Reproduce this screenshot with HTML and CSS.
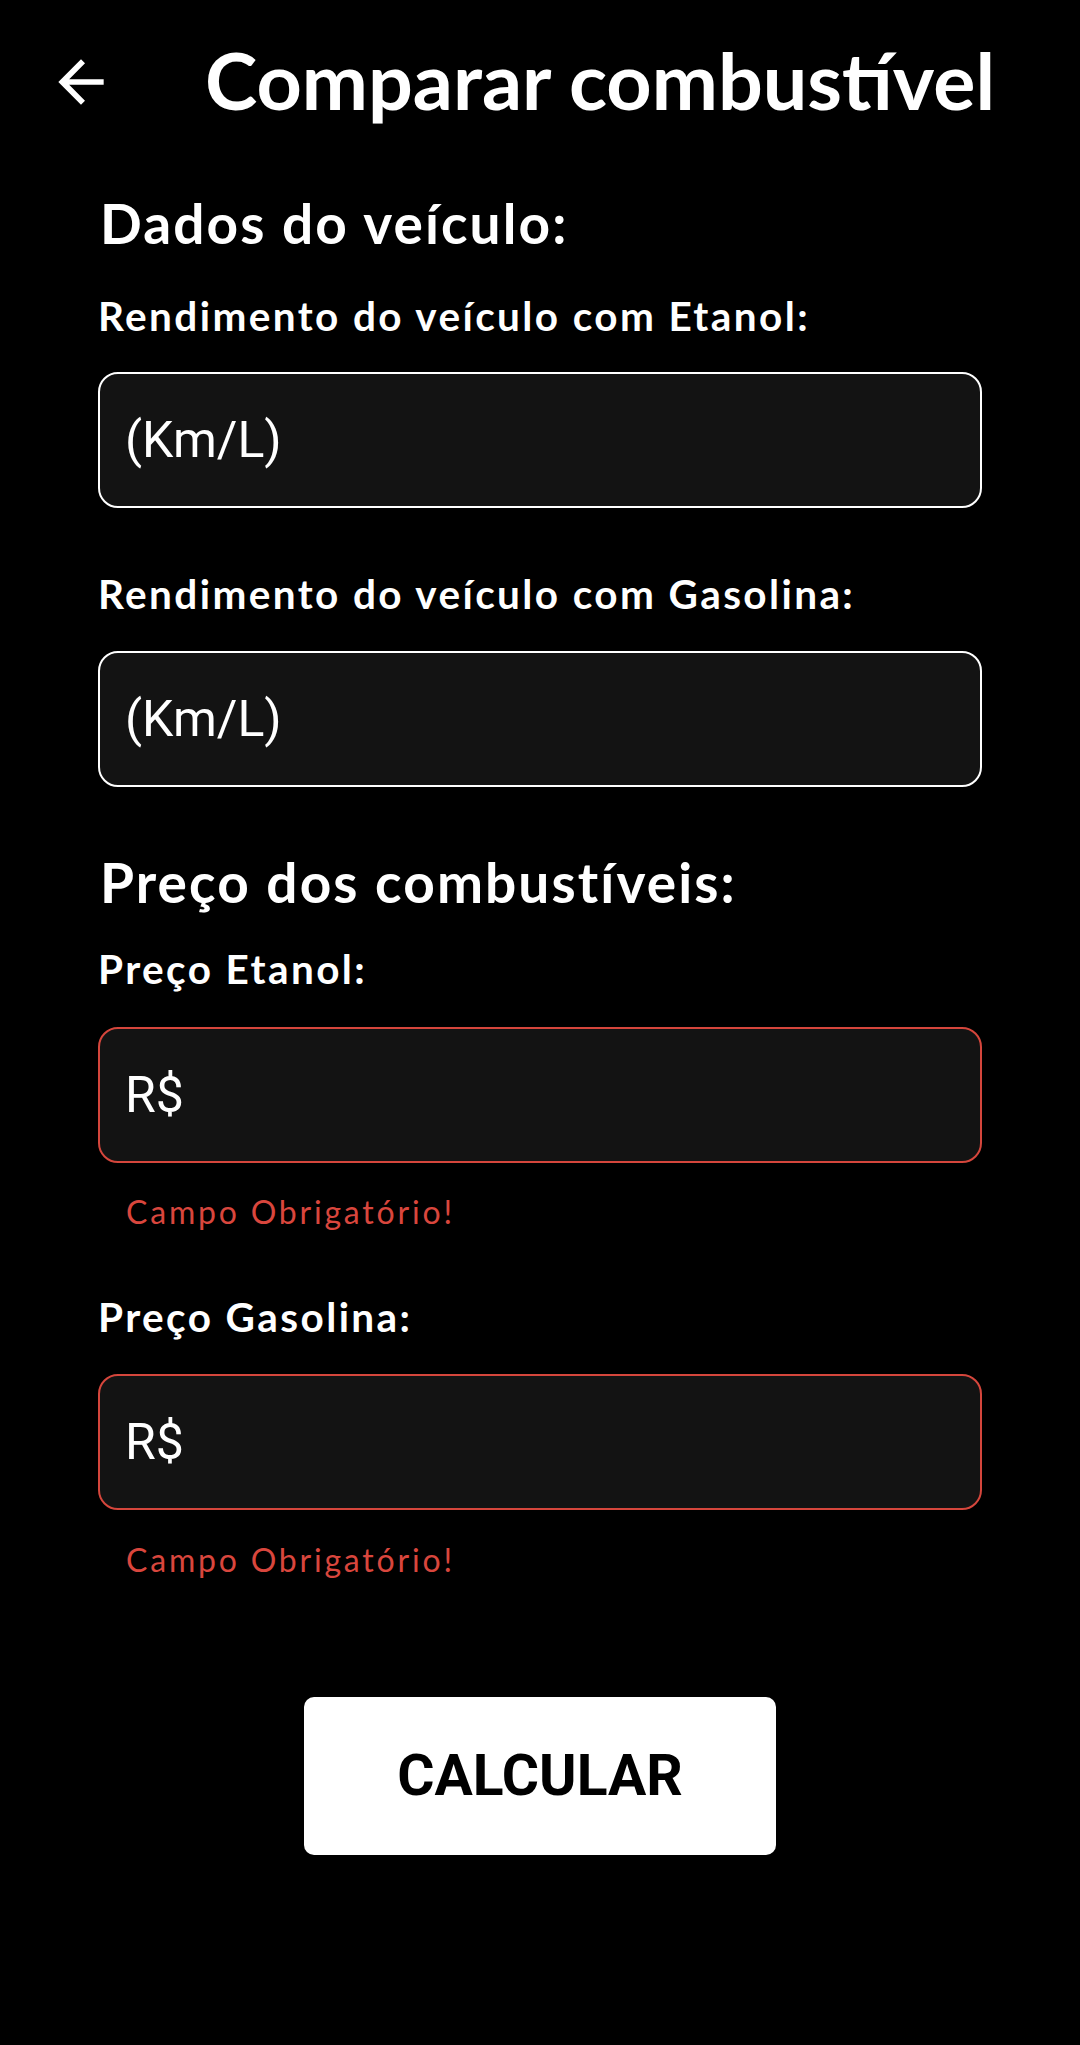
FILE: index.html
```html
<!DOCTYPE html>
<html lang="pt-BR">
<head>
<meta charset="utf-8">
<title>Comparar combustível</title>
<link rel="stylesheet" href="styles.css">
</head>
<body>
<div class="screen">
  <header class="topbar">
    <svg class="back" viewBox="0 0 24 24" aria-hidden="true"><path d="M20 11H7.83l5.59-5.59L12 4l-8 8 8 8 1.41-1.41L7.83 13H20v-2z" fill="#fff"/></svg>
    <h1 class="title">Comparar combustível</h1>
  </header>
  <main class="form">
    <h2 class="section section-first">Dados do veículo:</h2>
    <label class="label label-first">Rendimento do veículo com Etanol:</label>
    <div class="field"><span class="ph">(Km/L)</span></div>
    <label class="label label-next">Rendimento do veículo com Gasolina:</label>
    <div class="field"><span class="ph">(Km/L)</span></div>

    <h2 class="section section-second">Preço dos combustíveis:</h2>
    <label class="label label-price">Preço Etanol:</label>
    <div class="field field-error field-price"><span class="ph">R$</span></div>
    <p class="error error-first">Campo Obrigatório!</p>
    <label class="label label-next2">Preço Gasolina:</label>
    <div class="field field-error"><span class="ph">R$</span></div>
    <p class="error error-second">Campo Obrigatório!</p>

    <div class="actions"><button class="btn" type="button">CALCULAR</button></div>
  </main>
</div>
</body>
</html>
```
FILE: styles.css
```css
html, body {
  margin: 0;
  padding: 0;
  background: #000;
}
.screen {
  width: 1080px;
  min-height: 2045px;
  background: #000;
  color: #fff;
  font-family: "Lato", "Noto Sans", sans-serif;
}
.topbar {
  display: flex;
  align-items: flex-start;
  padding-top: 30px;
}
.back {
  width: 68px;
  height: 68px;
  margin-left: 47px;
  margin-top: 18px;
  flex: none;
}
.title {
  margin: 3px 0 0 90px;
  font-size: 79px;
  line-height: 1.2;
  font-weight: 700;
}
.form {
  display: flex;
  flex-direction: column;
  padding: 0 98px;
}
.section {
  margin: 0;
  padding-left: 2px;
  font-size: 55px;
  line-height: 1.2;
  font-weight: 700;
  letter-spacing: 2.1px;
}
.section-first { margin-top: 62px; }
.section-second { margin-top: 62px; }
.label {
  display: block;
  font-size: 40.5px;
  line-height: 1.2;
  font-weight: 700;
  letter-spacing: 2.4px;
  margin-bottom: 32px;
}
.label-first { margin-top: 36px; }
.label-next { margin-top: 62px; }
.label-price { margin-top: 30px; margin-bottom: 33px; }
.label-next2 { margin-top: 62px; }
.field {
  box-sizing: border-box;
  height: 136px;
  border: 2.5px solid #fff;
  border-radius: 20px;
  background: #131313;
  display: flex;
  align-items: center;
  padding-left: 25px;
}
.field-error {
  border-color: #d5463c;
}
.ph {
  font-family: "Roboto", sans-serif;
  font-size: 50px;
  color: #fff;
  line-height: 1;
}
.error {
  margin: 0;
  padding-left: 28px;
  font-size: 32px;
  line-height: 1.2;
  letter-spacing: 2.8px;
  color: #d9463d;
}
.error-first { margin-top: 30px; }
.error-second { margin-top: 31px; }
.actions {
  display: flex;
  justify-content: center;
  margin-top: 118px;
}
.btn {
  width: 472px;
  height: 158px;
  border: none;
  border-radius: 10px;
  background: #fff;
  color: #000;
  font-family: "Roboto", sans-serif;
  font-weight: 700;
  font-size: 57px;
  padding: 0;
}
```
